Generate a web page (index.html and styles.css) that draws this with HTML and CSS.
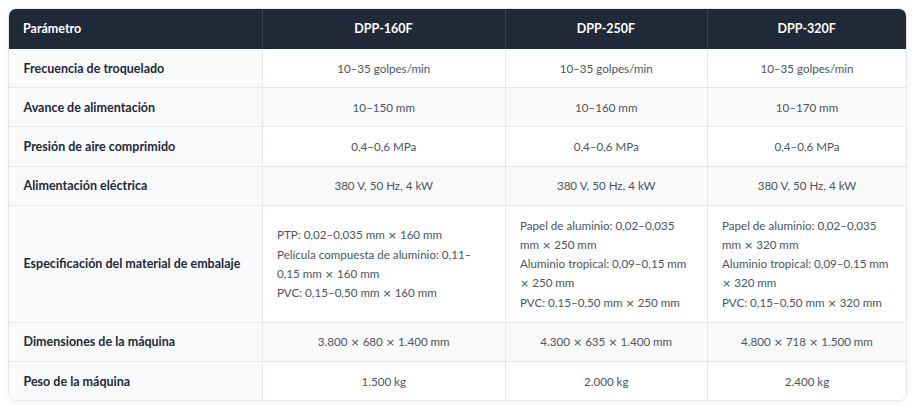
FILE: index.html
```html
<!DOCTYPE html>
<html lang="es">
<head>
<meta charset="utf-8">
<link rel="stylesheet" href="styles.css">
</head>
<body>
<div class="wrap">
<table class="spec">
  <colgroup>
    <col class="c1"><col class="c2"><col class="c3"><col class="c4">
  </colgroup>
  <thead>
    <tr><th class="param">Parámetro</th><th>DPP-160F</th><th>DPP-250F</th><th>DPP-320F</th></tr>
  </thead>
  <tbody>
    <tr><td class="param">Frecuencia de troquelado</td><td>10–35 golpes/min</td><td>10–35 golpes/min</td><td>10–35 golpes/min</td></tr>
    <tr><td class="param">Avance de alimentación</td><td>10–150 mm</td><td>10–160 mm</td><td>10–170 mm</td></tr>
    <tr><td class="param">Presión de aire comprimido</td><td>0,4–0,6 MPa</td><td>0,4–0,6 MPa</td><td>0,4–0,6 MPa</td></tr>
    <tr><td class="param">Alimentación eléctrica</td><td>380 V, 50 Hz, 4 kW</td><td>380 V, 50 Hz, 4 kW</td><td>380 V, 50 Hz, 4 kW</td></tr>
    <tr class="multi"><td class="param">Especificación del material de embalaje</td>
      <td>PTP: 0,02–0,035 mm <span class="x">×</span> 160 mm<br>Película compuesta de aluminio: 0,11–<span class="nw">0,15 mm <span class="x">×</span> 160 mm</span><br>PVC: 0,15–0,50 mm <span class="x">×</span> 160 mm</td>
      <td>Papel de aluminio: 0,02–0,035 <span class="nw">mm <span class="x">×</span> 250 mm</span><br>Aluminio tropical: 0,09–0,15 mm <span class="nw"><span class="x">×</span> 250 mm</span><br>PVC: 0,15–0,50 mm <span class="x">×</span> 250 mm</td>
      <td>Papel de aluminio: 0,02–0,035 <span class="nw">mm <span class="x">×</span> 320 mm</span><br>Aluminio tropical: 0,09–0,15 mm <span class="nw"><span class="x">×</span> 320 mm</span><br>PVC: 0,15–0,50 mm <span class="x">×</span> 320 mm</td></tr>
    <tr><td class="param">Dimensiones de la máquina</td><td>3.800 <span class="x">×</span> 680 <span class="x">×</span> 1.400 mm</td><td>4.300 <span class="x">×</span> 635 <span class="x">×</span> 1.400 mm</td><td>4.800 <span class="x">×</span> 718 <span class="x">×</span> 1.500 mm</td></tr>
    <tr><td class="param">Peso de la máquina</td><td>1.500 kg</td><td>2.000 kg</td><td>2.400 kg</td></tr>
  </tbody>
</table>
</div>
</body>
</html>
```
FILE: styles.css
```css
html, body { margin: 0; padding: 0; background: #ffffff; }
body { padding: 8px 12px 8px 8px; font-family: Lato, "Noto Sans", sans-serif; }
.wrap {
  border: 1px solid #e5e7eb;
  border-radius: 8px;
  overflow: hidden;
  box-shadow: 0 2px 6px rgba(0,0,0,0.06);
}
.spec {
  width: 100%;
  border-collapse: collapse;
  table-layout: fixed;
  font-size: 11.6px;
  line-height: 19.2px;
}
.c1 { width: 253px; }
.c2 { width: 243px; }
.c3 { width: 202px; }
.c4 { width: auto; }
.spec th {
  background: #1f2937;
  color: #ffffff;
  font-weight: 700;
  font-size: 12.5px;
  text-align: center;
  padding: 10px 14px 10px;
  height: 20px;
  border-left: 1px solid #374151;
}
.spec th.param { text-align: left; border-left: none; }
.spec td {
  padding: 9.5px 14px 9.5px 14.5px;
  text-align: center;
  color: #4b5563;
  border-top: 1px solid #e5e7eb;
  border-left: 1px solid #e5e7eb;
  background: #ffffff;
}
.spec tbody tr:first-child td { border-top: none; }
.spec tbody tr:nth-child(even) td { background: #fafafa; }
.spec td.param {
  text-align: left;
  font-weight: 700;
  font-size: 12.5px;
  color: #1f2937;
  background: #f8fafc;
  border-left: none;
}
.spec tbody tr:nth-child(even) td.param { background: #f8fafc; }
.spec tr.multi td { text-align: left; padding-top: 10px; padding-bottom: 10px; }
.nw { white-space: nowrap; }
.x { font-family: "DejaVu Sans", sans-serif; font-size: 11px; line-height: 1; }
```
